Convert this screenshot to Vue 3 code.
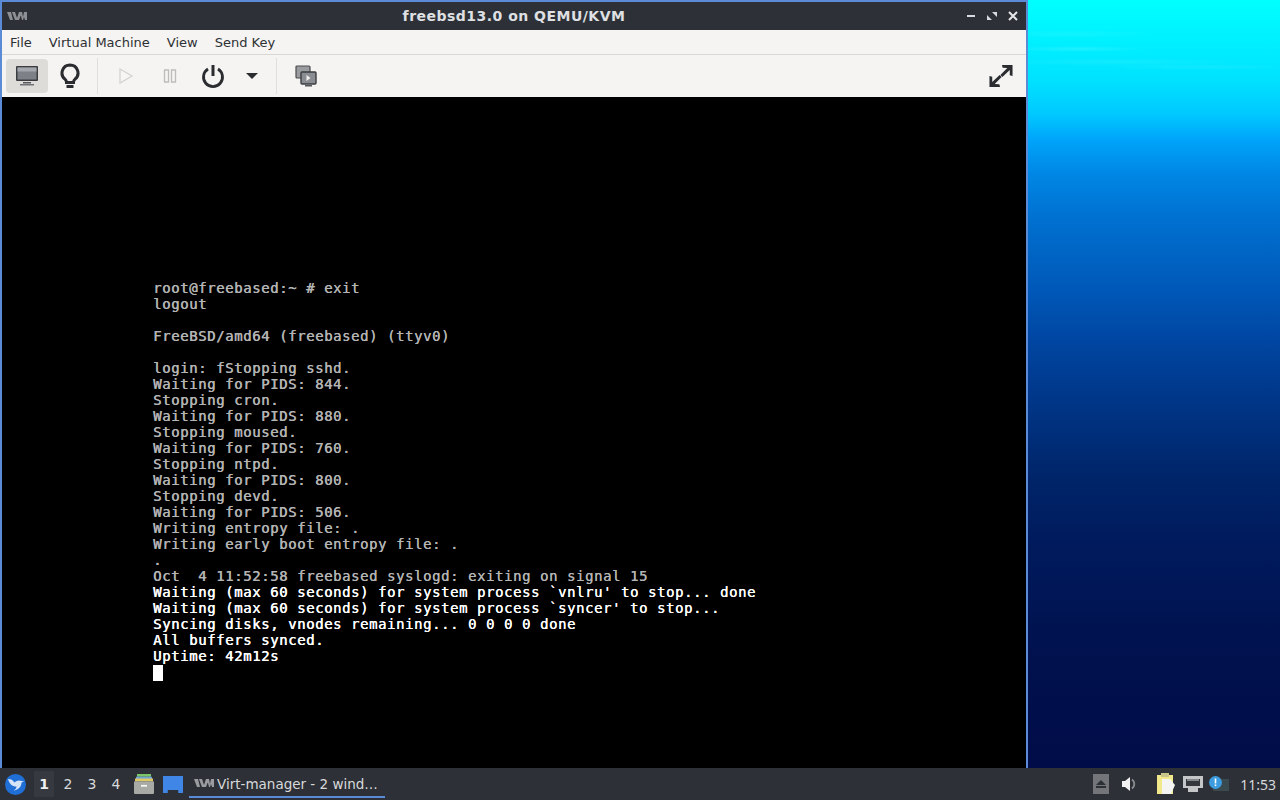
<script setup>
const lines = [
  ['root@freebased:~ # exit', 0],
  ['logout', 0],
  ['', 0],
  ['FreeBSD/amd64 (freebased) (ttyv0)', 0],
  ['', 0],
  ['login: fStopping sshd.', 0],
  ['Waiting for PIDS: 844.', 0],
  ['Stopping cron.', 0],
  ['Waiting for PIDS: 880.', 0],
  ['Stopping moused.', 0],
  ['Waiting for PIDS: 760.', 0],
  ['Stopping ntpd.', 0],
  ['Waiting for PIDS: 800.', 0],
  ['Stopping devd.', 0],
  ['Waiting for PIDS: 506.', 0],
  ['Writing entropy file: .', 0],
  ['Writing early boot entropy file: .', 0],
  ['.', 0],
  ['Oct  4 11:52:58 freebased syslogd: exiting on signal 15', 0],
  ['Waiting (max 60 seconds) for system process `vnlru\' to stop... done', 1],
  ['Waiting (max 60 seconds) for system process `syncer\' to stop...', 1],
  ['Syncing disks, vnodes remaining... 0 0 0 0 done', 1],
  ['All buffers synced.', 1],
  ['Uptime: 42m12s', 1],
]
const menus = ['File', 'Virtual Machine', 'View', 'Send Key']
const desks = ['1', '2', '3', '4']
</script>

<template>
  <div class="screen">
    <div class="desktop">
      <div class="window">
        <div class="titlebar">
          <svg class="vm-logo" width="20" height="10" viewBox="0 0 20 10">
            <path d="M0 1h4l2 8H3zM5 1h3l2 6 2-6h3l-3 8H8zM13 1h2l1 5 1-5h3v8h-2l-1-3-1 3h-1z" fill="#8d8f94" />
          </svg>
          <span class="title">freebsd13.0 on QEMU/KVM</span>
          <div class="win-btns">
            <svg width="10" height="10" viewBox="0 0 10 10"><rect x="1" y="4" width="8" height="2" fill="#d8dade" /></svg>
            <svg width="10" height="10" viewBox="0 0 10 10"><path d="M5 1h5v5zM0 4l5 5H0z" fill="#d8dade" /></svg>
            <svg width="10" height="10" viewBox="0 0 10 10"><path d="M1 1l8 8M9 1l-8 8" stroke="#e6e7ea" stroke-width="2" /></svg>
          </div>
        </div>
        <div class="menubar">
          <span v-for="m in menus" :key="m" class="menu">{{ m }}</span>
        </div>
        <div class="toolbar">
          <div class="tool active">
            <svg width="24" height="22" viewBox="0 0 24 22">
              <rect x="1" y="1" width="22" height="15" rx="1" fill="#3a3c40" />
              <rect x="2.500" y="2.500" width="19" height="12" fill="#7d8187" />
              <rect x="2.500" y="2.500" width="19" height="4" fill="#a3a6ab" />
              <rect x="8" y="17" width="8" height="1.500" fill="#55575b" />
              <rect x="5" y="19" width="14" height="1.500" fill="#6f7277" />
            </svg>
          </div>
          <div class="tool bulb">
            <svg width="20" height="26" viewBox="0 0 20 26">
              <path d="M10 2a8 8 0 0 0-5 14.200c1 .8 1.500 2 1.500 3.300h7c0-1.300.5-2.500 1.500-3.300A8 8 0 0 0 10 2z" fill="none" stroke="#2a2c2f" stroke-width="3" />
              <rect x="6.500" y="22" width="7" height="3" fill="#2a2c2f" />
            </svg>
          </div>
          <div class="sep"></div>
          <div class="tool">
            <svg width="18" height="18" viewBox="0 0 18 18"><path d="M3 2l12 7-12 7z" fill="#f7f6f4" stroke="#d3d3d0" stroke-width="1.300" /></svg>
          </div>
          <div class="tool pause">
            <svg width="16" height="16" viewBox="0 0 16 16"><path d="M2.500 2h4v12h-4zM9.500 2h4v12h-4z" fill="none" stroke="#bcbcb9" stroke-width="1.300" /></svg>
          </div>
          <div class="tool power">
            <svg width="24" height="24" viewBox="0 0 24 24">
              <path d="M7 5a9.500 9.500 0 1 0 10 0" fill="none" stroke="#2a2c2f" stroke-width="2.800" />
              <path d="M12 1v11" stroke="#2a2c2f" stroke-width="3" />
            </svg>
          </div>
          <div class="tool arrow">
            <svg width="14" height="8" viewBox="0 0 14 8"><path d="M1 1h12L7 7z" fill="#2a2c2f" /></svg>
          </div>
          <div class="sep second"></div>
          <div class="tool">
            <svg width="24" height="24" viewBox="0 0 24 24">
              <rect x="2" y="2" width="14" height="12" rx="1" fill="#9a9c9f" stroke="#4a4c50" stroke-width="1.200" />
              <rect x="7" y="8" width="15" height="12" rx="1" fill="#8a8d91" stroke="#3a3c40" stroke-width="1.400" />
              <path d="M12.500 11l4 3-4 3z" fill="#f2f1ef" />
              <rect x="11" y="21" width="7" height="1.500" fill="#55575b" />
            </svg>
          </div>
          <svg class="fullscreen" width="24" height="24" viewBox="0 0 26 26">
            <path d="M14 1h11.500v12l-3 -.8V6.400L14.500 14l-2.200-2.200L19.800 4.200 14.800 4z" fill="#2a2c2f" />
            <path d="M12 25H.5V13l3 .8v5.800L11.500 12l2.200 2.200L6.200 21.800l5 .2z" fill="#2a2c2f" />
          </svg>
        </div>
        <div class="console">
          <div v-for="(l, i) in lines" :key="i" class="line" :class="{ bright: l[1] }">{{ l[0] }}</div>
          <div class="cursor"></div>
        </div>
      </div>
      <div class="wallpaper"></div>
    </div>
    <div class="taskbar">
      <svg class="start" width="21" height="21" viewBox="0 0 21 21">
        <circle cx="10.500" cy="10.500" r="10.500" fill="#1f6fd6" />
        <path d="M3 5c3 0 5 1 6.500 3.500C11 7 13 5.500 17 7l2 .5-2.500 1c0 4-3 7.500-8 8 2-1 3-2.500 3-4C7 12.500 4.500 10 3 5z" fill="#d5e4f8" />
      </svg>
      <div class="desks">
        <span v-for="d in desks" :key="d" class="desk" :class="{ current: d === '1' }">{{ d }}</span>
      </div>
      <svg class="launch" width="20" height="20" viewBox="0 0 20 22" preserveAspectRatio="none">
        <rect x="3" y="0" width="14" height="3" fill="#7cc46a" />
        <rect x="2" y="3" width="16" height="3" fill="#6fa3d8" />
        <rect x="1" y="5" width="18" height="3" fill="#e2c860" />
        <rect x="0" y="8" width="20" height="14" rx="1" fill="#a8aba5" />
        <rect x="7" y="12" width="6" height="2" fill="#f4f4f0" />
      </svg>
      <svg class="launch show" width="20" height="17" viewBox="0 0 21 17" preserveAspectRatio="none">
        <path d="M0 0h21v17h-5v-3H5v3H0z" fill="#3f86e6" />
      </svg>
      <div class="task">
        <svg width="20" height="9" viewBox="0 0 20 9">
          <path d="M0 0h4l2 8H3zM5 0h3l2 6 2-6h3l-3 8H8zM13 0h2l1 5 1-5h3v8h-2l-1-3-1 3h-1z" fill="#9a9ca0" />
        </svg>
        <span>Virt-manager - 2 wind…</span>
      </div>
      <div class="tray">
        <svg class="t-eject" width="16" height="20" viewBox="0 0 16 20">
          <rect width="16" height="20" fill="#737578" />
          <path d="M8 6l5 5H3z" fill="#2d3036" /><rect x="3" y="12" width="10" height="2" fill="#2d3036" />
        </svg>
        <svg class="t-vol" width="16" height="16" viewBox="0 0 16 16">
          <path d="M1 5h3l5-4v14l-5-4H1z" fill="#f2f2f2" />
          <path d="M11 3.500a5.500 5.500 0 0 1 0 9" fill="none" stroke="#8a8c90" stroke-width="1.800" />
        </svg>
        <svg class="t-clip" width="20" height="22" viewBox="0 0 20 22">
          <rect x="1" y="2" width="16" height="19" fill="#f0e88a" />
          <rect x="5" y="0" width="8" height="4" fill="#c9c48a" />
          <path d="M6 6h8l5 6-4 9H6z" fill="#f4f4f2" />
        </svg>
        <svg class="t-net" width="20" height="16" viewBox="0 0 20 16">
          <path d="M0 0h20v12h-5v4H5v-4H0z" fill="#c4c6c8" />
          <rect x="3" y="3" width="14" height="7" fill="#34373c" />
          <path d="M5 3v2M7 3v2M9 3v2M11 3v2M13 3v2M15 3v2" stroke="#d8d8d8" stroke-width="1" />
        </svg>
        <svg class="t-note" width="20" height="16" viewBox="0 0 20 16">
          <rect x="4" y="3" width="16" height="12" fill="#3b4a4e" />
          <circle cx="6.500" cy="6.500" r="6.500" fill="#3d9be0" />
          <rect x="5.700" y="2.500" width="1.600" height="5" fill="#fff" /><rect x="5.700" y="8.500" width="1.600" height="1.600" fill="#fff" />
        </svg>
        <span class="clock">11:53</span>
      </div>
    </div>
  </div>
</template>

<style>
html, body { margin: 0; background: #000; }
</style>

<style scoped>
.screen {
  width: 1280px;
  height: 800px;
  display: flex;
  flex-direction: column;
  overflow: hidden;
  font-family: "DejaVu Sans", sans-serif;
}
.desktop { flex: 1; display: flex; min-height: 0; }
.window {
  width: 1024px;
  display: flex;
  flex-direction: column;
  border: solid #5b8bd6;
  border-width: 2px 2px 0 2px;
  flex: none;
}
.wallpaper {
  flex: 1;
  background:
    radial-gradient(ellipse 90px 4px at 40px 34px, rgba(170,255,255,.1), rgba(170,255,255,0)),
    radial-gradient(ellipse 70px 3px at 50px 49px, rgba(190,255,255,.16), rgba(190,255,255,0)),
    radial-gradient(ellipse 130px 4px at 90px 62px, rgba(170,255,255,.1), rgba(170,255,255,0)),
    radial-gradient(ellipse 100px 3px at 170px 67px, rgba(170,255,255,.1), rgba(170,255,255,0)),
    linear-gradient(180deg, #00ffff 0, #00f4ff 30px, #00e2ff 80px, #00c8ff 115px, #00a4fa 140px, #0086e4 175px, #0070d0 220px, #0058b8 290px, #0046a2 340px, #003688 400px, #002468 480px, #001a5c 550px, #00124f 640px, #000c48 768px);
}
.titlebar {
  height: 28px;
  background: #2d3036;
  display: flex;
  align-items: center;
  position: relative;
  color: #dfe0e3;
  flex: none;
}
.vm-logo { margin-left: 5px; }
.title {
  position: absolute;
  left: 0;
  right: 0;
  text-align: center;
  font-weight: 700;
  font-size: 14px;
  letter-spacing: .48px;
  line-height: 28px;
}
.win-btns {
  margin-left: auto;
  margin-right: 8px;
  display: flex;
  gap: 11px;
}
.menubar {
  height: 24px;
  background: #f5f4f2;
  display: flex;
  align-items: center;
  padding-left: 8px;
  gap: 17px;
  font-size: 13px;
  color: #2e3033;
  border-bottom: 1px solid #d9d8d5;
  flex: none;
}
.toolbar {
  height: 42px;
  background: #f5f4f2;
  display: flex;
  align-items: center;
  padding-left: 4px;
  flex: none;
}
.tool {
  width: 42px;
  height: 34px;
  display: flex;
  align-items: center;
  justify-content: center;
  border-radius: 4px;
  flex: none;
}
.tool.active { background: #dedcd8; }
.tool.bulb { margin-left: 1px; margin-right: -1px; }
.tool.pause { margin-left: 2px; }
.tool.power { margin-left: 1px; }
.tool.arrow { margin-left: -3px; }
.sep { width: 1px; height: 36px; background: #e0dfdc; margin: 0 7px; flex: none; }
.sep.second { margin: 0 8px 0 3px; }
.fullscreen { margin-left: auto; margin-right: 13px; }
.console {
  flex: 1;
  background: #000;
  padding: 183px 0 0 151px;
  font-family: "DejaVu Sans Mono", monospace;
  font-size: 14px;
  letter-spacing: .57px;
  color: #b4b4b4;
  text-shadow: .4px 0 0 currentColor;
}
.line { height: 16px; line-height: 16px; white-space: pre; }
.line.bright { color: #fff; }
.cursor { width: 10px; height: 16px; background: #fff; margin-top: 1px; }
.taskbar {
  height: 32px;
  background: #2d3036;
  display: flex;
  align-items: center;
  color: #d8d9db;
  font-size: 14px;
  flex: none;
}
.start { margin-left: 5px; }
.desks { display: flex; margin-left: 6px; }
.desk {
  width: 24px;
  height: 26px;
  line-height: 26px;
  text-align: center;
}
.desk.current { background: linear-gradient(#363a40, #363a40) center / 20px 100% no-repeat; color: #f0f0f0; font-weight: 700; }
.launch { margin-left: 6px; }
.launch.show { margin-left: 9px; }
.task {
  width: 196px;
  height: 30px;
  align-self: flex-start;
  box-sizing: border-box;
  margin-left: 6px;
  padding: 3px 0 0 5px;
  display: flex;
  align-items: center;
  gap: 3px;
  font-size: 13.5px;
  border-bottom: 2px solid #5b8bd6;
  flex: none;
}
.tray { margin-left: auto; display: flex; align-items: center; padding-right: 4px; }
.t-eject { margin-right: 12px; }
.t-vol { margin-right: 19px; }
.t-clip { margin-right: 7px; }
.t-net { margin-right: 6px; }
.t-note { margin-right: 11px; }
.clock { font-family: "Noto Sans", sans-serif; font-size: 14px; }
</style>
